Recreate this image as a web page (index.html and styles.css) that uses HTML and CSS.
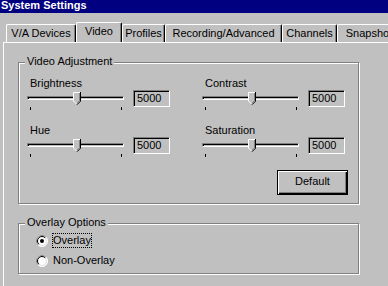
FILE: index.html
```html
<!DOCTYPE html>
<html>
<head>
<meta charset="utf-8">
<link rel="stylesheet" href="styles.css">
</head>
<body>
<div class="title">System Settings</div>
<div class="tabs">
  <div class="tab w-va">V/A Devices</div>
  <div class="tab w-video selected">Video</div>
  <div class="tab w-prof">Profiles</div>
  <div class="tab w-rec">Recording/Advanced</div>
  <div class="tab w-chan">Channels</div>
  <div class="tab w-snap">Snapshot</div>
</div>
<div class="panel">
  <div class="group group-video">
    <span class="legend">Video Adjustment</span>
    <div class="sliders">
      <div class="ctl">
        <div class="ctl-label">Brightness</div>
        <div class="ctl-row">
          <div class="slider">
            <div class="track"></div>
            <div class="ticks"><span class="tick"></span><span class="tick"></span></div>
            <svg class="thumb" width="8" height="13" viewBox="0 0 8 13"><polygon points="0,0 8,0 8,9 4,13 0,9" fill="#c0c0c0"/><path d="M0.5 9V0.5H7" stroke="#fff" fill="none"/><path d="M7.5 0V9.2L4 12.7" stroke="#000" fill="none"/><path d="M6.5 1V8.8L4 11.3" stroke="#808080" fill="none"/><path d="M0.5 9L3.5 12" stroke="#fff" fill="none"/></svg>
          </div>
          <div class="edit">5000</div>
        </div>
      </div>
      <div class="ctl">
        <div class="ctl-label">Contrast</div>
        <div class="ctl-row">
          <div class="slider">
            <div class="track"></div>
            <div class="ticks"><span class="tick"></span><span class="tick"></span></div>
            <svg class="thumb" width="8" height="13" viewBox="0 0 8 13"><polygon points="0,0 8,0 8,9 4,13 0,9" fill="#c0c0c0"/><path d="M0.5 9V0.5H7" stroke="#fff" fill="none"/><path d="M7.5 0V9.2L4 12.7" stroke="#000" fill="none"/><path d="M6.5 1V8.8L4 11.3" stroke="#808080" fill="none"/><path d="M0.5 9L3.5 12" stroke="#fff" fill="none"/></svg>
          </div>
          <div class="edit">5000</div>
        </div>
      </div>
      <div class="ctl">
        <div class="ctl-label">Hue</div>
        <div class="ctl-row">
          <div class="slider">
            <div class="track"></div>
            <div class="ticks"><span class="tick"></span><span class="tick"></span></div>
            <svg class="thumb" width="8" height="13" viewBox="0 0 8 13"><polygon points="0,0 8,0 8,9 4,13 0,9" fill="#c0c0c0"/><path d="M0.5 9V0.5H7" stroke="#fff" fill="none"/><path d="M7.5 0V9.2L4 12.7" stroke="#000" fill="none"/><path d="M6.5 1V8.8L4 11.3" stroke="#808080" fill="none"/><path d="M0.5 9L3.5 12" stroke="#fff" fill="none"/></svg>
          </div>
          <div class="edit">5000</div>
        </div>
      </div>
      <div class="ctl">
        <div class="ctl-label">Saturation</div>
        <div class="ctl-row">
          <div class="slider">
            <div class="track"></div>
            <div class="ticks"><span class="tick"></span><span class="tick"></span></div>
            <svg class="thumb" width="8" height="13" viewBox="0 0 8 13"><polygon points="0,0 8,0 8,9 4,13 0,9" fill="#c0c0c0"/><path d="M0.5 9V0.5H7" stroke="#fff" fill="none"/><path d="M7.5 0V9.2L4 12.7" stroke="#000" fill="none"/><path d="M6.5 1V8.8L4 11.3" stroke="#808080" fill="none"/><path d="M0.5 9L3.5 12" stroke="#fff" fill="none"/></svg>
          </div>
          <div class="edit">5000</div>
        </div>
      </div>
    </div>
    <div class="btn-row"><div class="button">Default</div></div>
  </div>
  <div class="group group-overlay">
    <span class="legend">Overlay Options</span>
    <div class="radios">
      <div class="radio-row">
        <svg class="radio" width="12" height="12" viewBox="0 0 12 12"><circle cx="6" cy="6" r="5.5" fill="#fff" stroke="#fff"/><path d="M2.1 9.9A5.5 5.5 0 0 1 9.9 2.1" stroke="#808080" fill="none"/><circle cx="6" cy="6" r="4.5" fill="#fff" stroke="#dfdfdf"/><path d="M2.8 9.2A4.5 4.5 0 0 1 9.2 2.8" stroke="#000" fill="none"/><circle cx="6" cy="6" r="2" fill="#000"/></svg>
        <span class="radio-label focus">Overlay</span>
      </div>
      <div class="radio-row">
        <svg class="radio" width="12" height="12" viewBox="0 0 12 12"><circle cx="6" cy="6" r="5.5" fill="#fff" stroke="#fff"/><path d="M2.1 9.9A5.5 5.5 0 0 1 9.9 2.1" stroke="#808080" fill="none"/><circle cx="6" cy="6" r="4.5" fill="#fff" stroke="#dfdfdf"/><path d="M2.8 9.2A4.5 4.5 0 0 1 9.2 2.8" stroke="#000" fill="none"/></svg>
        <span class="radio-label">Non-Overlay</span>
      </div>
    </div>
  </div>
</div>
</body>
</html>
```

FILE: styles.css
```css
html, body {
  margin: 0;
  padding: 0;
  width: 388px;
  height: 286px;
  overflow: hidden;
  background: #c0c0c0;
}
body {
  font-family: "Liberation Sans", Arial, sans-serif;
  font-size: 11px;
  line-height: 13px;
  color: #000;
}
.title {
  height: 13px;
  background: #000080;
  color: #fff;
  font-weight: bold;
  line-height: 11px;
  padding-left: 1px;
  overflow: hidden;
  white-space: nowrap;
}
.tabs {
  display: flex;
  align-items: flex-end;
  height: 20px;
  padding: 9px 0 0 6px;
  overflow: hidden;
}
.tab {
  flex: none;
  box-sizing: border-box;
  height: 18px;
  border-top: 1px solid #fff;
  border-left: 1px solid #fff;
  border-right: 1px solid #000;
  border-radius: 2px 2px 0 0;
  box-shadow: inset -1px 0 0 #808080;
  padding-top: 2px;
  text-align: center;
  white-space: nowrap;
  overflow: hidden;
}
.tab.selected {
  position: relative;
  z-index: 1;
  height: 21px;
  margin-bottom: -1px;
  background: #c0c0c0;
}
.w-va { width: 70px; }
.w-video { width: 46px; }
.w-prof { width: 43px; }
.w-rec { width: 117px; }
.w-chan { width: 55px; }
.w-snap { width: 64px; }
.panel {
  margin-left: 3px;
  height: 224px;
  border-top: 1px solid #fff;
  border-left: 1px solid #fff;
  padding: 19px 0 0 14px;
}
.group {
  position: relative;
  box-sizing: border-box;
  width: 341px;
  border: 1px solid #808080;
  box-shadow: 1px 1px 0 #fff, inset 1px 1px 0 #fff;
}
.group-video {
  height: 142px;
  padding: 14px 0 0 8px;
}
.group-overlay {
  margin-top: 19px;
  height: 51px;
  padding: 9px 0 0 17px;
}
.legend {
  position: absolute;
  top: -8px;
  left: 6px;
  padding: 0 2px;
  background: #c0c0c0;
  white-space: nowrap;
}
.sliders {
  display: grid;
  grid-template-columns: 143px 143px;
  column-gap: 32px;
  row-gap: 14px;
}
.ctl-label {
  padding-left: 3px;
  height: 13px;
}
.ctl-row {
  display: flex;
  gap: 9px;
}
.slider {
  position: relative;
  width: 97px;
  height: 20px;
}
.track {
  box-sizing: border-box;
  margin-top: 6px;
  height: 4px;
  border: 1px solid;
  border-color: #808080 #fff #fff #808080;
  box-shadow: inset 1px 1px 0 #000;
  background: #c0c0c0;
}
.ticks {
  display: flex;
  justify-content: space-between;
  padding: 0 2px 0 3px;
  margin-top: 7px;
}
.tick {
  width: 1px;
  height: 3px;
  background: #000;
}
.thumb {
  position: absolute;
  left: 46px;
  top: 2px;
  display: block;
}
.edit {
  box-sizing: border-box;
  width: 37px;
  height: 17px;
  border: 1px solid;
  border-color: #808080 #fff #fff #808080;
  box-shadow: inset 1px 1px 0 #000;
  padding: 1px 0 0 3px;
  background: #c0c0c0;
}
.btn-row {
  display: flex;
  justify-content: flex-end;
  padding-right: 10px;
  margin-top: 13px;
}
.button {
  box-sizing: border-box;
  width: 71px;
  height: 25px;
  border: 1px solid #000;
  box-shadow: inset 1px 1px 0 #fff, inset -1px -1px 0 #000, inset -2px -2px 0 #808080;
  padding-top: 4px;
  text-align: center;
}
.radios {
  display: flex;
  flex-direction: column;
  gap: 5px;
}
.radio-row {
  display: flex;
  align-items: center;
  gap: 4px;
}
.radio {
  display: block;
  flex: none;
}
.radio-label {
  border: 1px solid transparent;
  height: 13px;
  white-space: nowrap;
}
.radio-label.focus {
  border: 1px dotted #000;
}
```
